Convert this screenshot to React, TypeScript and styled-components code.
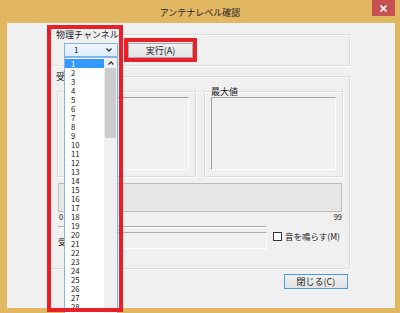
import React from "react";
import styled, { createGlobalStyle } from "styled-components";

const FONT = `"Noto Sans CJK JP", "Noto Sans", sans-serif`;

const GlobalStyle = createGlobalStyle`
  html, body { margin: 0; padding: 0; background: #E2B762; }
  body { font-family: ${FONT}; }
  *, *::before, *::after { box-sizing: border-box; }
`;

const Window = styled.div`
  position: relative;
  width: 400px;
  height: 313px;
  background: #E2B762;
  display: flex;
  flex-direction: column;
  overflow: hidden;
  font-family: ${FONT};
  color: #1a1a1a;
`;

const TitleBar = styled.div`
  height: 23px;
  flex: none;
  display: grid;
  grid-template-columns: 1fr auto 1fr;
`;

const Title = styled.div`
  grid-column: 2;
  font-size: 9px;
  line-height: 10px;
  padding-top: 8px;
  color: #222;
  white-space: nowrap;
`;

const CloseButton = styled.div`
  grid-column: 3;
  justify-self: end;
  margin-right: 5px;
  width: 23px;
  height: 16px;
  background: #C75050;
  display: flex;
  align-items: center;
  justify-content: center;
`;

const Client = styled.div`
  flex: 1;
  margin: 0 5px 5px 7px;
  background: #F0F0F0;
  padding: 11px 45px 0 42px;
  display: flex;
  flex-direction: column;
`;

const GroupBox = styled.div<{ $h: number; $pad: string }>`
  position: relative;
  flex: none;
  height: ${(p) => p.$h}px;
  padding: ${(p) => p.$pad};
  border: 1px solid #DCDCDC;
  box-shadow: inset 1px 1px 0 #fff, 1px 1px 0 #fff;
`;

const Legend = styled.span`
  position: absolute;
  left: 5px;
  top: -6px;
  padding: 0 1px;
  background: #F0F0F0;
  font-size: 9px;
  line-height: 11px;
  white-space: nowrap;
`;

const TopRow = styled.div`
  display: flex;
  gap: 10px;
`;

const ComboWrap = styled.div`
  position: relative;
  width: 54px;
  height: 14px;
`;

const Combo = styled.div`
  width: 100%;
  height: 100%;
  border: 1px solid #7EB4EA;
  background: linear-gradient(#EEF5FD, #DCECFC);
  display: flex;
  align-items: center;
  justify-content: space-between;
  padding: 0 5px 0 9px;
  font-size: 8px;
  line-height: 12px;
`;

const DropList = styled.div`
  position: absolute;
  left: 0;
  top: 14px;
  width: 54px;
  height: 300px;
  z-index: 5;
  border: 1px solid #84B5E8;
  background: #fff;
  display: flex;
  padding-top: 1px;
`;

const Options = styled.div`
  width: 39px;
  flex: none;
`;

const Option = styled.div<{ $selected?: boolean }>`
  height: 9px;
  line-height: 9px;
  font-size: 7.8px;
  padding-left: 6px;
  background: ${(p) => (p.$selected ? "#3399FF" : "transparent")};
  color: ${(p) => (p.$selected ? "#fff" : "#1a1a1a")};
`;

const ScrollBar = styled.div`
  flex: 1;
  margin-top: -1px;
  background: #F0F0F0;
  display: flex;
  flex-direction: column;
`;

const ScrollArrow = styled.div`
  height: 10px;
  display: flex;
  align-items: center;
  justify-content: center;
`;

const ScrollThumb = styled.div`
  height: 70px;
  margin: 0 1px;
  background: #CDCDCD;
`;

const PushButton = styled.button<{ $w: number; $default?: boolean }>`
  width: ${(p) => p.$w}px;
  height: 15px;
  padding: 0;
  border: 1px solid ${(p) => (p.$default ? "#4A9AE6" : "#ACACAC")};
  background: linear-gradient(#F2F2F2, #E3E3E3);
  font-family: ${FONT};
  font-size: 9px;
  line-height: 11px;
  color: #1a1a1a;
`;

const InnerRow = styled.div`
  display: grid;
  grid-template-columns: 1fr 1fr;
  column-gap: 8px;
`;

const Panel = styled.div`
  height: 73px;
  border-top: 1px solid #A0A0A0;
  border-left: 1px solid #A0A0A0;
  border-bottom: 1px solid #fff;
  border-right: 1px solid #fff;
`;

const Progress = styled.div`
  margin: 6px 0 0 1px;
  width: 284px;
  height: 29px;
  border: 1px solid #BCBCBC;
  background: #E6E6E6;
`;

const Scale = styled.div`
  width: 285px;
  padding-left: 2px;
  display: flex;
  justify-content: space-between;
  font-size: 7.5px;
  line-height: 9px;
`;

const FieldsRow = styled.div`
  margin: 5px 0 0 1px;
  display: grid;
  grid-template-columns: 209px auto;
  column-gap: 6px;
`;

const FieldsCol = styled.div`
  display: flex;
  flex-direction: column;
  gap: 4px;
`;

const FieldLine = styled.div`
  display: flex;
  align-items: center;
  gap: 4px;
`;

const FieldLabel = styled.span`
  font-size: 8.5px;
  line-height: 10px;
  white-space: nowrap;
  width: 38px;
`;

const Field = styled.div<{ $h: number }>`
  flex: 1;
  height: ${(p) => p.$h}px;
  border-top: 1px solid #ABABAB;
  border-left: 1px solid #ABABAB;
  border-bottom: 1px solid #fff;
  border-right: 1px solid #fff;
`;

const CheckLine = styled.label`
  padding-top: 5px;
  display: flex;
  align-items: center;
  gap: 3px;
  font-size: 8.5px;
  line-height: 10px;
  white-space: nowrap;
  align-self: start;
`;

const CheckBox = styled.span`
  width: 9px;
  height: 9px;
  border: 1px solid #333;
  background: #fff;
`;

const BottomRow = styled.div`
  margin-top: 5px;
  padding-right: 2px;
  display: flex;
  justify-content: flex-end;
`;

const Mark = styled.div<{ $x: number; $y: number; $w: number; $h: number }>`
  position: absolute;
  left: ${(p) => p.$x}px;
  top: ${(p) => p.$y}px;
  width: ${(p) => p.$w}px;
  height: ${(p) => p.$h}px;
  border: 4px solid #E8202A;
  z-index: 10;
  pointer-events: none;
`;

const channels = Array.from({ length: 33 }, (_, i) => i + 1);

export default function App() {
  return (
    <>
      <GlobalStyle />
      <Window>
        <TitleBar>
          <Title>アンテナレベル確認</Title>
          <CloseButton>
            <svg width="7" height="7" viewBox="0 0 7 7">
              <path d="M0.5 0.5L6.5 6.5M6.5 0.5L0.5 6.5" stroke="#fff" strokeWidth="1.6" />
            </svg>
          </CloseButton>
        </TitleBar>
        <Client>
          <GroupBox $h={32} $pad="8px 0 0 14px">
            <Legend>物理チャンネル</Legend>
            <TopRow>
              <ComboWrap>
                <Combo>
                  <span>1</span>
                  <svg width="6" height="4" viewBox="0 0 6 4">
                    <polyline points="0.5,0.5 3,3 5.5,0.5" fill="none" stroke="#333" strokeWidth="1.3" />
                  </svg>
                </Combo>
                <DropList>
                  <Options>
                    {channels.map((n) => (
                      <Option key={n} $selected={n === 1}>
                        {n}
                      </Option>
                    ))}
                  </Options>
                  <ScrollBar>
                    <ScrollArrow>
                      <svg width="6" height="4" viewBox="0 0 6 4">
                        <polyline points="0.5,3.5 3,1 5.5,3.5" fill="none" stroke="#333" strokeWidth="1.3" />
                      </svg>
                    </ScrollArrow>
                    <ScrollThumb />
                  </ScrollBar>
                </DropList>
              </ComboWrap>
              <PushButton $w={65}>実行(A)</PushButton>
            </TopRow>
          </GroupBox>

          <GroupBox $h={193} $pad="14px 6px 0 7px" style={{ marginTop: 10 }}>
            <Legend>受信レベル</Legend>
            <InnerRow>
              <GroupBox $h={86} $pad="5px 6px 0 6px">
                <Legend>現在値</Legend>
                <Panel />
              </GroupBox>
              <GroupBox $h={86} $pad="5px 6px 0 6px">
                <Legend>最大値</Legend>
                <Panel />
              </GroupBox>
            </InnerRow>
            <Progress />
            <Scale>
              <span>0</span>
              <span>99</span>
            </Scale>
            <FieldsRow>
              <FieldsCol>
                <Field $h={16} />
                <FieldLine>
                  <FieldLabel>受信状態</FieldLabel>
                  <Field $h={17} />
                </FieldLine>
              </FieldsCol>
              <CheckLine>
                <CheckBox />
                音を鳴らす(M)
              </CheckLine>
            </FieldsRow>
          </GroupBox>

          <BottomRow>
            <PushButton $w={64} $default>
              閉じる(C)
            </PushButton>
          </BottomRow>
        </Client>
        <Mark $x={47} $y={25} $w={76} $h={287} />
        <Mark $x={124} $y={38} $w={73} $h={24} />
      </Window>
    </>
  );
}
